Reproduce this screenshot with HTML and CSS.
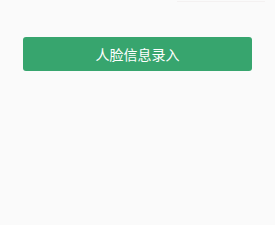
FILE: index.html
```html
<!DOCTYPE html>
<html lang="zh-CN">

<head>
    <meta charset="UTF-8">
    <meta name="viewport" content="width=device-width, initial-scale=1.0">
    <title>人脸信息录入</title>
    <link rel="stylesheet" href="styles.css">
</head>

<body>
    <div class="top">
        <div class="top_line"></div>
    </div>
    <div class="page">
        <button type="button" class="btn">人脸信息录入</button>
    </div>
</body>

</html>
```

FILE: styles.css
```css
* {
    margin: 0;
    padding: 0;
    border: 0 none;
    outline-style: none;
}

html,
body {
    height: 100%;
}

body {
    background-color: #fafafa;
    font-family: "Noto Sans CJK SC", "Liberation Sans", sans-serif;
}

.top {
    display: flex;
    justify-content: flex-end;
    padding: 1px 10px 0 0;
}

.top_line {
    width: 88px;
    height: 1px;
    background-color: #f4f1f1;
}

.page {
    padding: 35px 23px 0;
}

.btn {
    display: block;
    width: 100%;
    height: 34px;
    border-radius: 3px;
    background-color: #37a56e;
    color: #fff;
    font-size: 14px;
    font-family: "Noto Sans CJK SC", "Liberation Sans", sans-serif;
    cursor: pointer;
}
```
